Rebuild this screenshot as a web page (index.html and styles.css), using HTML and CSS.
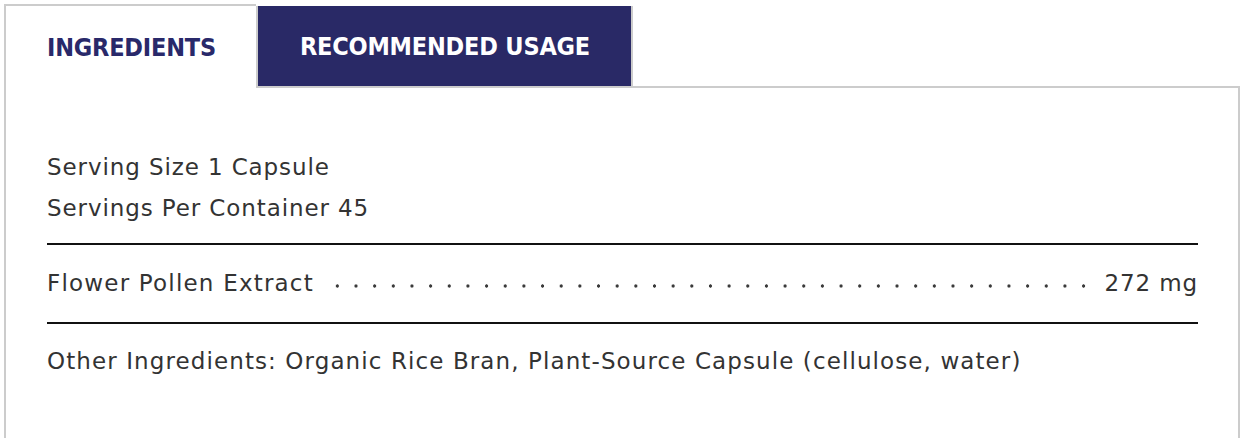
FILE: index.html
```html
<!DOCTYPE html>
<html lang="en">
<head>
<meta charset="utf-8">
<title>Ingredients</title>
<link rel="stylesheet" href="styles.css">
</head>
<body>
<div class="product-tabs">
  <div class="tab-row">
    <div class="tab tab-active">INGREDIENTS</div>
    <div class="tab tab-inactive">RECOMMENDED USAGE</div>
    <div class="tab-filler"></div>
  </div>
  <div class="panel">
    <div class="serving">
      <div class="serving-line">Serving Size 1 Capsule</div>
      <div class="serving-line">Servings Per Container 45</div>
    </div>
    <div class="facts-row">
      <span class="facts-name">Flower Pollen Extract</span>
      <span class="facts-leader"></span>
      <span class="facts-amount">272 mg</span>
    </div>
    <div class="other">Other Ingredients: Organic Rice Bran, Plant-Source Capsule (cellulose, water)</div>
  </div>
</div>
</body>
</html>
```

FILE: styles.css
```css
html, body {
  margin: 0;
  padding: 0;
  background: #ffffff;
  overflow: hidden;
}

.product-tabs {
  padding: 4px 0 0 4px;
}

.tab-row {
  display: flex;
  align-items: flex-end;
}

.tab {
  font-family: "DejaVu Sans Condensed", "DejaVu Sans", sans-serif;
  font-stretch: condensed;
  font-weight: bold;
  font-size: 25px;
  letter-spacing: -0.2px;
  display: flex;
  align-items: center;
  height: 80px;
  white-space: nowrap;
}

.tab-active {
  color: #29296a;
  background: #ffffff;
  border-top: 2px solid #cccccc;
  border-left: 2px solid #cccccc;
  height: 82px;
  padding: 0 40px 0 41px;
}

.tab-inactive {
  color: #ffffff;
  background: #292966;
  border: 2px solid #cccccc;
  border-top: 0;
  padding: 0 41px 0 42px;
}

.tab-filler {
  flex: 1;
  border-bottom: 2px solid #cccccc;
}

.panel {
  border-left: 2px solid #cccccc;
  border-right: 2px solid #cccccc;
  padding: 59px 40px 60px 41px;
  font-family: "DejaVu Sans", sans-serif;
  font-size: 23px;
  letter-spacing: 0.9px;
  color: #333333;
}

.serving-line {
  line-height: 41px;
}

.serving {
  padding-bottom: 14px;
  border-bottom: 2px solid #111111;
}

.facts-row {
  display: flex;
  align-items: center;
  line-height: 41px;
  padding: 18px 0;
  border-bottom: 2px solid #111111;
}

.facts-name {
  letter-spacing: 1.2px;
}

.facts-leader {
  flex: 1;
  height: 6px;
  margin: 4px 6px 0 14px;
  background-image: radial-gradient(circle, #3a3a3a 1.4px, rgba(255,255,255,0) 1.9px);
  background-size: 18.67px 6px;
  background-repeat: repeat-x;
  background-position: 0 0;
}

.other {
  line-height: 41px;
  margin-top: 17px;
  letter-spacing: 1.1px;
}
```
